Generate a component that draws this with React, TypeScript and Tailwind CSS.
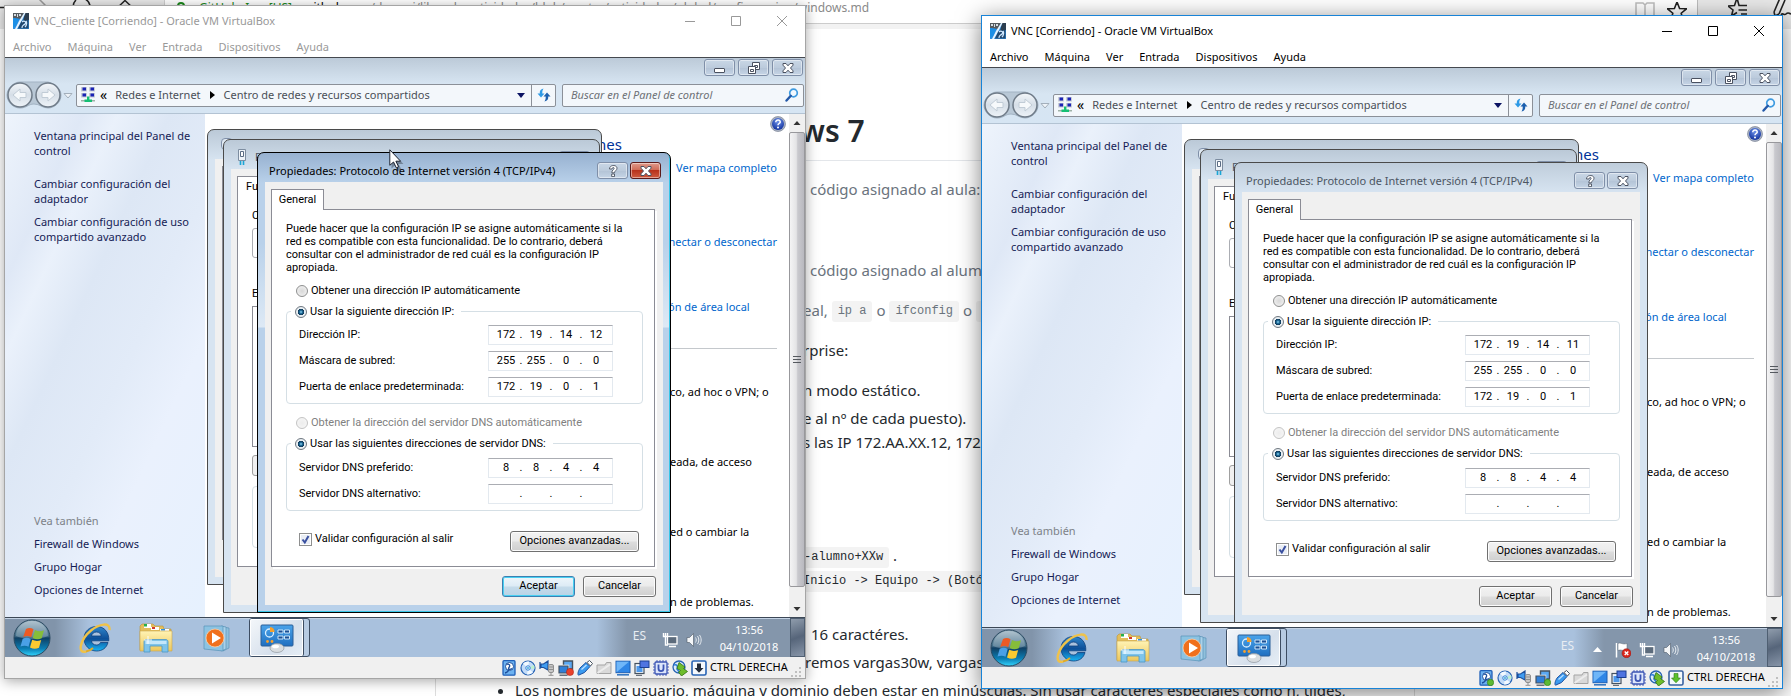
import React from "react";

const UI = "font-['Noto_Sans',sans-serif] text-[11px]";
const SMALL = "font-[Roboto,sans-serif] text-[11px]";

/* ---------- shared gradients ---------- */
function Defs() {
  return (
    <svg width="0" height="0" className="absolute" aria-hidden="true">
      <defs>
        <linearGradient id="gBlue" x1="0" y1="0" x2="0" y2="1">
          <stop offset="0" stopColor="#4aa3ea" />
          <stop offset="1" stopColor="#1f6fc0" />
        </linearGradient>
        <linearGradient id="gFolder" x1="0" y1="0" x2="0" y2="1">
          <stop offset="0" stopColor="#fff3b4" />
          <stop offset="1" stopColor="#ecc75c" />
        </linearGradient>
        <linearGradient id="gOrb" x1="0" y1="0" x2="0" y2="1">
          <stop offset="0" stopColor="#9fb6c4" />
          <stop offset="0.45" stopColor="#3d6a86" />
          <stop offset="0.5" stopColor="#0f3f63" />
          <stop offset="0.8" stopColor="#0b7fb5" />
          <stop offset="1" stopColor="#33d6ff" />
        </linearGradient>
        <linearGradient id="gIE" x1="0" y1="0" x2="0" y2="1">
          <stop offset="0" stopColor="#2f86cc" />
          <stop offset="0.5" stopColor="#0d4f98" />
          <stop offset="1" stopColor="#18b4f2" />
        </linearGradient>
        <linearGradient id="gNav" x1="0" y1="0" x2="0" y2="1">
          <stop offset="0" stopColor="#f4f7fa" />
          <stop offset="0.5" stopColor="#d5dee7" />
          <stop offset="1" stopColor="#eef3f8" />
        </linearGradient>
        <radialGradient id="gHelp" cx="0.5" cy="0.3" r="0.7">
          <stop offset="0" stopColor="#6f93ea" />
          <stop offset="1" stopColor="#10309c" />
        </radialGradient>
      </defs>
    </svg>
  );
}

/* ---------- icons ---------- */
const VBoxIcon = () => (
  <svg viewBox="0 0 16 16" className="size-4 shrink-0">
    <rect width="16" height="16" fill="#2f8fe0" />
    <path d="M0 0h11L8 6 0 5z" fill="#555b60" />
    <path d="M1 1h2v2H1zM4 1h1v3H4zM6 1h2v2H6z" fill="#d6dde2" />
    <path d="M12 0h4v7l-6 1z" fill="#2c3e50" />
    <path d="M11 0h1.500L8 9l-4 7H2l4-8z" fill="#e7f4ff" />
    <path d="M0 5l6 1-3 7-3 2z" fill="#1c8fe6" />
    <path d="M8.500 8l7-1.500V15.500H5z" fill="#22486f" />
    <path d="M9 9c2-2 5 0 3 2s-3 1-3 4M13 8c1 1 1 4-1 6" stroke="#cfe8ff" fill="none" strokeWidth="1.200" />
  </svg>
);
const NetCenterIcon = () => (
  <svg viewBox="0 0 16 16" className="size-4 shrink-0">
    {[
      [1, 0],
      [9, 0],
      [1, 6],
      [9, 6],
    ].map(([x, y]) => (
      <g key={`${x}-${y}`}>
        <rect x={x} y={y} width="6" height="4.500" fill="#c9ced6" />
        <rect x={x + 1.5} y={y + 0.5} width="3.500" height="3" fill="#1b23b5" />
      </g>
    ))}
    <path d="M1 13h14v1.500H1z" fill="#9fb2a8" />
    <path d="M7 9.500h2.400v3H12v2.600H4.500v-2.600H7z" fill="#16bf74" />
  </svg>
);
const NavButtons = () => (
  <svg viewBox="0 0 72 30" className="h-[30px] w-[72px] shrink-0">
    <path d="M15 2h28c4 1 13 5 13 13s-7 13-13 13-8-4-14-4-7 4-14 4S2 22 2 15 9 2 15 2z" fill="#b9c8d6" stroke="#a3b3c3" />
    {[15, 43].map((c) => (
      <circle key={c} cx={c} cy="15" r="12" fill="url(#gNav)" stroke="#6f7b88" strokeWidth="1.500" />
    ))}
    <path d="M8 15l7-6v3.500h6v5h-6V21z" fill="#f6f9fb" stroke="#c1ccd6" />
    <path d="M50 15l-7-6v3.500h-6v5h6V21z" fill="#f6f9fb" stroke="#c1ccd6" />
    <path d="M59 13.500h8L63 18z" fill="#eef3f8" stroke="#a3afbb" />
  </svg>
);
const RefreshIcon = () => (
  <svg viewBox="0 0 14 14" className="size-3.5">
    <path d="M6.500 .5C3.500 1 2.500 3 2.800 5.500H.5L4 9.500l3.500-4H5.300C5.200 3.500 5.500 2 6.500 .5z" fill="#2e9ae6" />
    <path d="M7.500 13.500c3-.5 4-2.500 3.700-5h2.300L10 4.500l-3.500 4h2.200c.1 2-.2 3.500-1.200 5z" fill="#1b5fae" />
  </svg>
);
const SearchGlass = () => (
  <svg viewBox="0 0 14 14" className="size-3.5 shrink-0">
    <circle cx="8.500" cy="5" r="3.800" fill="#f2f9ff" stroke="#3f9be0" strokeWidth="1.700" />
    <path d="M5.800 7.800L1.500 12.500" stroke="#2459a8" strokeWidth="2.400" strokeLinecap="round" />
  </svg>
);
const HelpIcon = () => (
  <svg viewBox="0 0 16 16" className="size-4">
    <circle cx="8" cy="8" r="7.500" fill="#a9b2c4" stroke="#6d7688" strokeWidth="0.600" />
    <circle cx="8" cy="8" r="6" fill="url(#gHelp)" />
    <path d="M5.800 6.200c0-3 4.600-2.800 4.400-.1-.1 1.400-2.200 1.500-2.200 3.100" stroke="#fff" strokeWidth="1.500" fill="none" />
    <circle cx="8" cy="11.400" r="1" fill="#fff" />
  </svg>
);
const CaptionGlyph = ({ kind }: { kind: "min" | "restore" | "close" | "help" }) => (
  <svg viewBox="0 0 14 12" className="h-3 w-3.5">
    {kind === "min" && <rect x="1.500" y="6.500" width="10" height="4" rx="0.500" fill="#fff" stroke="#4a5160" />}
    {kind === "restore" && (
      <g fill="#fff" stroke="#4a5160">
        <path d="M5.500.5h7v7h-7z" />
        <path d="M7.500 3.500h3v2h-3z" />
        <path d="M1.500 4.500h7v7h-7z" />
        <path d="M3.500 7.500h3v2h-3z" />
      </g>
    )}
    {kind === "close" && (
      <path d="M2 1.500h3L7 3.800l2-2.300h3v1.700L9.500 6 12 8.800v1.700H9L7 8.200 5 10.500H2V8.800L4.500 6 2 3.200z" fill="#fff" stroke="#4a5160" />
    )}
    {kind === "help" && (
      <g fill="#fff" stroke="#4a5160" strokeWidth="0.900">
        <path d="M3.500 4C3.500-.5 11 -.5 11 3.200c0 2.300-2.500 2.500-2.500 4.600h-2.700c0-3 2.300-3 2.300-4.500 0-1.200-2-1.200-2 .7z" />
        <path d="M5.700 9h2.800v2.600H5.700z" />
      </g>
    )}
  </svg>
);
const AdapterIcon = () => (
  <svg viewBox="0 0 10 16" className="h-4 w-2.5 shrink-0">
    <path d="M1.500.5h7v11h-7z" fill="#eef3f8" stroke="#7d8da0" />
    <path d="M3.500 2.500h3v5h-3z" fill="#fff" stroke="#5b6d84" />
    <path d="M3.500 12v4M6.500 12v4" stroke="#1aa6d6" strokeWidth="1.600" />
  </svg>
);
const StartOrb = () => (
  <svg viewBox="0 0 38 38" className="size-[38px]">
    <circle cx="19" cy="19" r="18" fill="url(#gOrb)" stroke="#2b4a61" />
    <path d="M3 17a16 15 0 0 1 32 0c-8 4-24 4-32 0z" fill="#fff" opacity="0.220" />
    <path d="M13 10c2.500-1.300 5-1.300 7.500.2l-2.300 8c-2.500-1.500-5-1.400-8-.2z" fill="#ec5a24" />
    <path d="M22 11c3 1.700 6 1.700 9 .2l-2.300 8c-3 1.500-6 1.300-9-.2z" fill="#86bd3a" />
    <path d="M9.700 19.800c3-1.500 5.500-1.300 8 .2l-2.200 7.800c-2.500-1.500-5-1.500-8-.2z" fill="#4aa0e6" />
    <path d="M19.200 20.800c3 1.500 6 1.500 9 .2L26 28.800c-3 1.500-6 1.300-9-.2z" fill="#fbc930" />
  </svg>
);
const IEIcon = () => (
  <svg viewBox="0 0 32 32" className="size-8">
    <path
      d="M17.500 4.500c-7 0-12.500 5-12.500 12S10.500 29 17.500 29c5.500 0 10-2.800 11.500-8.500h-7.500c-.8 1.800-2.200 2.500-4 2.500-3 0-4.700-1.600-5-4.200H29.800C30.300 10.500 25.500 4.500 17.500 4.500zm-5 9.500c.5-2.500 2.400-4 5-4s4.500 1.500 4.800 4z"
      fill="url(#gIE)"
      stroke="#0c3f7c"
      strokeWidth="0.800"
    />
    <path d="M7 29.500C-2.500 32 1.500 17 12 8.500 20 2 31.500 -.5 30.500 8" fill="none" stroke="#efc24a" strokeWidth="2.400" />
    <path d="M7 29.500c2.500-.5 5-1.500 7-3.500" fill="none" stroke="#e3ac25" strokeWidth="1.800" />
  </svg>
);
const FolderIcon = () => (
  <svg viewBox="0 0 34 30" className="h-[30px] w-[34px]">
    <path d="M1 3l2-2h11l2 2h8l1 3h7v21H1z" fill="#e3be5b" stroke="#b9933a" strokeWidth="0.600" />
    <path d="M5 1h7v4H5z" fill="#fff" />
    <path d="M5 1h3v2.500H5z" fill="#27b04a" />
    <path d="M12 4h8v3h-8z" fill="#fff" />
    <path d="M13 4h3v2h-3z" fill="#d33a2c" />
    <path d="M21 6h9v3h-9z" fill="#fff" />
    <path d="M22 6h4v1.500h-4z" fill="#2b8fe0" />
    <path d="M1 8h32v20H1z" fill="url(#gFolder)" stroke="#c9a449" strokeWidth="0.600" />
    <path d="M5 18.500c0-1 1-2 2-2h20c1 0 2 1 2 2V29h-6v-6H11v6H5z" fill="#7fc4ea" stroke="#4a97c6" strokeWidth="0.800" />
    <path d="M6.500 18h21v3h-21z" fill="#c4e7fb" />
    <path d="M9 13v8M5 17h8" stroke="#fff" strokeWidth="0.900" />
  </svg>
);
const MediaIcon = () => (
  <svg viewBox="0 0 30 28" className="h-7 w-[30px]">
    <path d="M20 3l6 1v20l-6 3z" fill="#8fc0dc" stroke="#5b94b8" strokeWidth="0.700" />
    <path d="M18 2l5 1v22l-5 2z" fill="#a9d2ea" stroke="#5b94b8" strokeWidth="0.700" />
    <path d="M1 2h19v25L1 25z" fill="#8cc3e2" stroke="#5793b8" strokeWidth="0.700" />
    <circle cx="12" cy="14" r="9" fill="#f0701c" stroke="#fbd0a8" strokeWidth="0.800" />
    <path d="M9 8.500l9 5.500-9 5.500z" fill="#fff" />
  </svg>
);
const PanelIcon = () => (
  <svg viewBox="0 0 34 30" className="h-[30px] w-[34px]">
    <rect x="1" y="2" width="32" height="21" rx="1" fill="url(#gBlue)" stroke="#2a5f98" />
    <circle cx="9.500" cy="10" r="4" fill="none" stroke="#d9efff" strokeWidth="1.300" />
    <path d="M10 9V4a5 5 0 0 1 4.500 5z" fill="#f6a02c" />
    <path d="M18 7h5v3h-5zM24.500 7h5v3h-5zM18 13h5v3h-5zM24.500 13h5v3h-5z" fill="#1b4f94" stroke="#d9efff" strokeWidth="0.900" />
    <circle cx="7.500" cy="18.500" r="1.400" fill="#f6a02c" />
    <circle cx="12" cy="18.500" r="1.400" fill="#f6a02c" />
    <ellipse cx="17" cy="25" rx="7" ry="4.500" fill="#d9dde0" stroke="#8f979d" strokeWidth="0.700" />
    <ellipse cx="15.500" cy="23.500" rx="3.500" ry="1.800" fill="#fff" />
  </svg>
);
const TrayNet = () => (
  <svg viewBox="0 0 16 16" className="size-4">
    <path d="M1.500 1v3.500h4V1M3.500 1v12H6" fill="none" stroke="#fff" strokeWidth="1.400" />
    <rect x="5.500" y="4.500" width="9.500" height="7.500" fill="#5c6b7c" stroke="#fff" strokeWidth="1.300" />
    <path d="M7 14.500h7" stroke="#fff" strokeWidth="1.500" />
  </svg>
);
const TrayVolume = () => (
  <svg viewBox="0 0 16 16" className="size-4">
    <path d="M1 5.500h2.500L7.500 1.500v13L3.500 10.500H1z" fill="#f4f6f8" stroke="#4c5866" strokeWidth="0.600" />
    <path d="M9.500 5.500c1 1.500 1 3.500 0 5M11.500 4c1.800 2.500 1.800 5.500 0 8M13.500 3c2.200 3 2.200 7 0 10" fill="none" stroke="#e6ebf0" />
  </svg>
);
const TrayFlag = () => (
  <svg viewBox="0 0 16 16" className="size-4">
    <path d="M1.500 1v14.500" stroke="#fff" strokeWidth="1.500" />
    <path d="M3 1.500c3-1.500 4 1.500 9 0V8C8 9.500 6 7 3 8.500z" fill="#fff" stroke="#5b6673" strokeWidth="0.500" />
    <circle cx="11.500" cy="11.200" r="4.500" fill="#d8271d" stroke="#8f1410" strokeWidth="0.500" />
    <path d="M9.700 9.400l3.600 3.600M13.300 9.400L9.700 13" stroke="#fff" strokeWidth="1.400" />
  </svg>
);

/* Icons of the virtual machine's status bar. */
function StatusIcons({ on }: { on: boolean }) {
  const box = "size-4 shrink-0";
  const led = on ? <circle cx="12.500" cy="12.500" r="3.200" fill="#5cba34" stroke="#2b7a14" strokeWidth="0.600" /> : null;
  return (
    <div className="flex items-center gap-[3px]">
      <svg viewBox="0 0 16 16" className={box}>
        <rect x="2" y="0.700" width="12" height="14.500" rx="1" fill="#6db2f0" stroke="#1f5fb8" strokeWidth="1.300" />
        <circle cx="8.500" cy="6.500" r="4" fill="#fff" stroke="#1d4f9c" />
        <path d="M5.500 4.500c3-1 4 1 2.500 3s1 2.500 3 1M7.500 9.500c0 2-1.500 3-3.500 3.500" fill="none" stroke="#1d4f9c" strokeWidth="1.300" />
        {led}
      </svg>
      <svg viewBox="0 0 16 16" className={box}>
        <circle cx="8" cy="8" r="7" fill="#c3dcf8" stroke="#2763b4" strokeWidth="1.200" />
        <path d="M8 8L3 3.500A7 7 0 0 1 9 1.500zM8 8l5 4.500a7 7 0 0 1-6 2z" fill="#f2f9ff" />
        <path d="M8 8l6-3a6.500 6.500 0 0 1 .3 4z" fill="#bdf0cf" />
        <circle cx="8" cy="8" r="2.200" fill="#fff" stroke="#2f7fd8" />
        <circle cx="8" cy="8" r="0.900" fill="#24a0d8" />
      </svg>
      <svg viewBox="0 0 16 16" className={box}>
        <path d="M1 2v7M2 4h2.500L9 1v9L4.500 7.500H2z" fill="#3f9bf0" stroke="#1d4f9c" strokeWidth="1.200" />
        <rect x="9.500" y="4.500" width="5" height="8" rx="1.500" fill="#c8c8c8" stroke="#8f8f8f" />
        <path d="M12 12.500v2.500M9.500 15.300h5M9.500 7h5M9.500 9.500h5" stroke="#8f8f8f" />
      </svg>
      <svg viewBox="0 0 16 16" className={box}>
        <path d="M5.500 1h9v8h-9z" fill="#5aa8f2" stroke="#46525f" strokeWidth="1.400" />
        <path d="M1 6h9v7H1z" fill="#2f7fd8" stroke="#f4f7fa" strokeWidth="2.400" />
        <path d="M1 6h9v7H1z" fill="#2f7fd8" stroke="#46525f" strokeWidth="1.200" />
        <path d="M1.500 15.200h8" stroke="#46525f" strokeWidth="1.200" />
        {on ? led : <circle cx="12" cy="12" r="3.600" fill="#e8412c" stroke="#a82012" strokeWidth="0.500" />}
      </svg>
      <svg viewBox="0 0 16 16" className={box}>
        <path d="M3 8l6-5.500 4 4L7.500 12.500 1.500 15.200C0 14 2 9.500 3 8z" fill="#3b9bf0" stroke="#1d4f9c" />
        <path d="M10 2.500L12.500.5l3 3L13.500 6z" fill="#fff" stroke="#46525f" />
        <path d="M4.500 9.500l5-4.500" stroke="#bfe0ff" strokeWidth="1.300" />
      </svg>
      <svg viewBox="0 0 16 16" className={box}>
        <path d="M1 5h8l1.500-2.500h4.500v11H1z" fill="#d9d9d9" stroke="#a5a5a5" />
        <path d="M1.500 13L14 4.500" stroke="#ededed" strokeWidth="2" />
      </svg>
      <svg viewBox="0 0 16 16" className={box}>
        <rect x="1" y="1.200" width="14" height="11.500" fill="#2f86e6" stroke="#1d5fb4" />
        <path d="M1.500 12.200L14 1.700H1.500z" fill="#6fb6f8" />
        <path d="M2 14.800h12" stroke="#3a78c0" strokeWidth="1.600" />
      </svg>
      <svg viewBox="0 0 16 16" className={box}>
        <rect x="1" y="3.500" width="9" height="10" fill="#eef4fb" stroke="#46525f" strokeWidth="1.200" />
        <rect x="2.500" y="6" width="6" height="6" fill="#4f9aec" />
        <rect x="6" y="1" width="9" height="6.500" fill="#4f74e0" stroke="#1b3f92" />
        <path d="M2 15.300h6" stroke="#46525f" />
      </svg>
      <svg viewBox="0 0 16 16" className={box}>
        <path d="M4 0v16M7 0v16M10 0v16M13 0v16M0 4h16M0 7h16M0 10h16M0 13h16" stroke="#3c55b4" strokeWidth="0.900" />
        <rect x="2" y="2" width="12" height="12" rx="1" fill="#dde6fb" stroke="#3c55b4" strokeWidth="1.300" />
        <path d="M5.500 4.500v4c0 3.500 5 3.500 5 0v-4" fill="none" stroke="#3c55b4" strokeWidth="1.800" />
      </svg>
      <svg viewBox="0 0 16 16" className={box}>
        <circle cx="7" cy="7" r="6" fill="#dcecfb" stroke="#2763b4" strokeWidth="1.300" />
        <path d="M2 5c3-1 4 1 3 4l3 4" fill="none" stroke="#2f7fd8" strokeWidth="1.500" />
        <path d="M7 2.500l6 4.500-1.500 1.500 4 3-6 4.500-3-4 2-1.500-3.500-2z" fill="#6ebd2c" stroke="#2e6e10" strokeWidth="0.800" />
      </svg>
      <svg viewBox="0 0 16 16" className={box}>
        <rect x="1" y="1" width="14" height="14" rx="1.500" fill="#f4f8fc" stroke={on ? "#3a62a0" : "#2763b4"} strokeWidth="1.600" />
        <path d="M6 3.500h4V8h2.500L8 12.800 3.500 8H6z" fill={on ? "#5cc02c" : "#222b3a"} stroke={on ? "#2b7a14" : "none"} strokeWidth="0.600" />
      </svg>
    </div>
  );
}

/* ---------- guest pieces ---------- */
function CaptionButton({ kind, label, red }: { kind: "min" | "restore" | "close" | "help"; label: string; red?: boolean }) {
  const tone = red
    ? "border-[#5b1a1a] bg-[linear-gradient(#e09a8c,#cf6a55_48%,#b8321c_50%,#cf5b40)]"
    : "border-[#7f8fa8] bg-[linear-gradient(#c9d7e6,#bccbdc_50%,#b3c3d6_52%,#c6d5e6)]";
  return (
    <button aria-label={label} className={`grid h-[17px] w-[31px] place-items-center rounded-[3px] border shadow-[inset_0_0_0_1px_rgba(255,255,255,0.45)] ${tone}`}>
      <CaptionGlyph kind={kind} />
    </button>
  );
}

function IpField({ id, label, octets }: { id: string; label: string; octets: string[] }) {
  return (
    <div className="flex items-center justify-between">
      <label htmlFor={`${id}-0`}>{label}</label>
      <div className="flex h-5 w-[125px] items-center border border-[#e3e9ef] border-t-[#abadb3] bg-white pl-1">
        {octets.map((o, i) => (
          <React.Fragment key={i}>
            {i > 0 && <span className="w-1 text-center">.</span>}
            <input
              id={`${id}-${i}`}
              aria-label={`${label} ${i + 1}`}
              defaultValue={o}
              className="h-4 w-[26px] bg-transparent p-0 text-center outline-none"
            />
          </React.Fragment>
        ))}
      </div>
    </div>
  );
}

function Radio({ name, label, checked, disabled }: { name: string; label: string; checked?: boolean; disabled?: boolean }) {
  return (
    <label className={`flex items-center gap-[3px] leading-[13px] ${disabled ? "text-[#808080]" : "text-black"}`}>
      <input
        type="radio"
        name={name}
        defaultChecked={checked}
        disabled={disabled}
        className="size-3 appearance-none rounded-full border border-[#8e8f8f] bg-[radial-gradient(#d8d8d8,#f6f6f6)] checked:border-[#6f7780] checked:bg-[radial-gradient(#9fe0fa_0,#1f6f9e_20%,#0d3656_42%,#e8eef2_50%)] disabled:border-[#c4c4c4] disabled:bg-[radial-gradient(#ececec,#f8f8f8)]"
      />
      {label}
    </label>
  );
}

function PushButton({ children, wide, primary }: { children: React.ReactNode; wide?: boolean; primary?: boolean }) {
  const tone = primary
    ? "border-[#3c7fb1] bg-[linear-gradient(#eef6fb,#ddebf5_48%,#c5dbea_52%,#b8d3e6)] shadow-[inset_0_0_0_1px_#48d0f2]"
    : "border-[#707070] bg-[linear-gradient(#f2f2f2,#ebebeb_48%,#dddddd_52%,#cfcfcf)] shadow-[inset_0_0_0_1px_#fcfcfc]";
  return <button className={`h-[21px] rounded-[3px] border ${wide ? "w-[129px]" : "w-[73px]"} ${tone}`}>{children}</button>
}

function TcpDialog({ id, active, host }: { id: string; active: boolean; host: string }) {
  const frame = active
    ? "border-black bg-[linear-gradient(#97b1d0_0px,#b9d1ea_30px,#b9d1ea_90px,#dde9f5_174px,#b9d1ea_175px)] shadow-[inset_-1px_-1px_0_#38c6e8]"
    : "border-[#4a4a4a] bg-[linear-gradient(#bfcddb_0px,#d7e4f1_30px)]";
  return (
    <section
      aria-label="Propiedades: Protocolo de Internet versión 4 (TCP/IPv4)"
      className={`absolute top-[94px] left-[252px] flex h-[461px] w-[414px] flex-col rounded-t-[7px] border px-[7px] pb-[7px] ${frame} ${SMALL}`}
    >
      <header className="flex h-[29px] shrink-0 items-center pt-1.5 pl-1">
        <h2 className={`grow leading-4 ${UI} ${active ? "text-black" : "text-[#4c5663]"}`}>Propiedades: Protocolo de Internet versión 4 (TCP/IPv4)</h2>
        <div className="flex gap-0.5 pr-0.5">
          <CaptionButton kind="help" label="Ayuda" />
          <CaptionButton kind="close" label="Cerrar" red={active} />
        </div>
      </header>
      <div className="flex grow flex-col bg-[#f0f0f0] pt-[7px] pr-[7px] pl-1.5 text-black">
        <button className="relative z-10 -mb-px h-[21px] w-[53px] border border-b-0 border-[#8b8c95] bg-white">General</button>
        <div className="mr-px h-[358px] border border-[#8b8c95] bg-white pt-3 pr-[11px] pl-3.5 shadow-[2px_2px_0_#fff]">
          <p className="w-[340px] pb-4 leading-[13px]">
            Puede hacer que la configuración IP se asigne automáticamente si la
            <br />
            red es compatible con esta funcionalidad. De lo contrario, deberá
            <br />
            consultar con el administrador de red cuál es la configuración IP
            <br />
            apropiada.
          </p>
          <div className="-mt-1.5 pl-2.5">
            <Radio name={`${id}-ip`} label="Obtener una dirección IP automáticamente" />
          </div>
          <fieldset className="mt-2 h-[99px] rounded-[4px] border border-[#d5dfe5] pr-[29px] pl-1.5">
            <legend className="ml-[-2px] pr-[7px] pl-1">
              <Radio name={`${id}-ip`} label="Usar la siguiente dirección IP:" checked />
            </legend>
            <div className="flex flex-col gap-1.5 pt-[7px] pl-1.5">
              <IpField id={`${id}-addr`} label="Dirección IP:" octets={["172", "19", "14", host]} />
              <IpField id={`${id}-mask`} label="Máscara de subred:" octets={["255", "255", "0", "0"]} />
              <IpField id={`${id}-gate`} label="Puerta de enlace predeterminada:" octets={["172", "19", "0", "1"]} />
            </div>
          </fieldset>
          <div className="mt-3 pl-2.5">
            <Radio name={`${id}-dns-auto`} label="Obtener la dirección del servidor DNS automáticamente" disabled />
          </div>
          <fieldset className="mt-2 h-[74px] rounded-[4px] border border-[#d5dfe5] pr-[29px] pl-1.5">
            <legend className="ml-[-2px] pr-[7px] pl-1">
              <Radio name={`${id}-dns`} label="Usar las siguientes direcciones de servidor DNS:" checked />
            </legend>
            <div className="flex flex-col gap-1.5 pt-2 pl-1.5">
              <IpField id={`${id}-dns1`} label="Servidor DNS preferido:" octets={["8", "8", "4", "4"]} />
              <IpField id={`${id}-dns2`} label="Servidor DNS alternativo:" octets={["", "", "", ""]} />
            </div>
          </fieldset>
          <div className="flex items-start justify-between pt-5 pr-1 pl-[13px]">
            <label className="flex items-center gap-[3px]">
              <span className="grid size-[13px] place-items-center">
                <input
                  type="checkbox"
                  defaultChecked
                  className="col-start-1 row-start-1 size-[13px] appearance-none border border-[#8e8f8f] bg-[#e9edf4] shadow-[inset_0_0_0_1px_#fff]"
                />
                <svg viewBox="0 0 13 13" className="pointer-events-none col-start-1 row-start-1 size-[13px]">
                  <path d="M3.500 6.500L5.800 9.500 9.500 3" fill="none" stroke="#3a50a0" strokeWidth="2" />
                </svg>
              </span>
              Validar configuración al salir
            </label>
            <PushButton wide>Opciones avanzadas...</PushButton>
          </div>
        </div>
        <div className="flex justify-end gap-2 pt-[9px]">
          <PushButton primary={active}>Aceptar</PushButton>
          <PushButton>Cancelar</PushButton>
        </div>
      </div>
    </section>
  );
}

function BackDialogs() {
  const frame = "absolute rounded-t-[7px] border border-[#4a4a4a] bg-[linear-gradient(#bbc9d7_0px,#d7e4f1_30px)] px-[7px] pb-[7px] text-black";
  return (
    <>
      <div className={`${frame} top-[71px] left-[202px] flex h-[456px] w-[395px] flex-col`}>
        <div className="flex h-[29px] shrink-0 items-end pl-1.5">
          <span className="mb-[9px] h-3 w-3 rounded-sm border border-[#7f8fa8] bg-[#dfe9f3]" />
        </div>
        <div className="grow bg-[#f0f0f0] pt-[7px] pl-[7px]">
          <div className="h-[374px] border border-[#8b8c95] bg-[#e8ecf0]" />
        </div>
      </div>
      <div className={`${frame} top-[81px] left-[218px] flex h-[474px] w-[377px] flex-col ${SMALL}`}>
        <div className="flex h-[29px] shrink-0 items-start pt-[9px] pl-1.5">
          <AdapterIcon />
          <span className={`pl-2 leading-4 text-[#4c5663] ${UI}`}>P</span>
          <span className="mt-0.5 mr-0.5 ml-auto">
            <CaptionButton kind="close" label="Cerrar propiedades" />
          </span>
        </div>
        <div className="grow bg-[#f0f0f0] pt-[7px] pl-1.5">
          <div className="flex h-[391px] flex-col border border-[#8b8c95] bg-white pl-3.5 leading-4">
            <span className="-ml-1.5 pt-0.5">Fu</span>
            <span className="pt-[13px]">C</span>
            <div className="mt-1 h-[30px] shrink-0 rounded-[3px] border border-[#abadb3]" />
            <span className="pt-7">E</span>
            <div className="mt-1 h-[141px] shrink-0 border border-[#8b8c95]" />
            <div className="mt-2 h-[21px] shrink-0 rounded-[3px] border border-[#a0a0a0] bg-[#f0f0f0]" />
            <div className="mt-2.5 h-[62px] shrink-0 rounded-[4px] border border-[#d5dfe5]" />
          </div>
        </div>
      </div>
    </>
  );
}

function Sidebar() {
  const link = "block leading-[15px] text-[#151c55]";
  return (
    <nav className="flex w-[200px] shrink-0 flex-col justify-between bg-[linear-gradient(115deg,#eef4fc_0%,#dfe8f6_18%,#eaf1fb_26%,#dde7f5_38%,#e2ebf8_55%,#eaf1fd_70%,#e6f1fe_100%)] pt-3.5 pb-4 pl-[29px]">
      <div>
        <a href="#panel" className={link}>
          Ventana principal del Panel de
          <br />
          control
        </a>
        <a href="#adaptador" className={`mt-[18px] ${link}`}>
          Cambiar configuración del
          <br />
          adaptador
        </a>
        <a href="#avanzado" className={`mt-2 ${link}`}>
          Cambiar configuración de uso
          <br />
          compartido avanzado
        </a>
      </div>
      <div className="leading-[23px] text-[#151c55]">
        <p className="text-[#7d8288]">Vea también</p>
        <a href="#firewall" className="block">Firewall de Windows</a>
        <a href="#grupo" className="block">Grupo Hogar</a>
        <a href="#internet" className="block">Opciones de Internet</a>
      </div>
    </nav>
  );
}

function Guest({ id, active, host, flag }: { id: string; active: boolean; host: string; flag: boolean }) {
  return (
    <div className={`relative flex h-[600px] flex-col overflow-hidden border-t border-[#45494f] bg-white ${UI}`}>
      <div className="flex h-14 shrink-0 flex-col border-b border-[#b3c3d3] bg-[linear-gradient(#bccad8,#d7e5f2_26px,#d6e5f3)]">
        <div className="flex h-[22px] shrink-0 justify-end gap-[3px] pt-px pr-0.5">
          <CaptionButton kind="min" label="Minimizar" />
          <CaptionButton kind="restore" label="Restaurar" />
          <CaptionButton kind="close" label="Cerrar ventana" />
        </div>
        <div className="flex items-center">
          <NavButtons />
          <div className="-ml-px flex h-[23px] w-[480px] items-center rounded-[2px] border border-[#8b9098] bg-[#f3f7fb] pl-[3px] text-[#4a4f57]">
            <NetCenterIcon />
            <span className="pl-1 text-[14px] leading-4 text-black">«</span>
            <span className="pl-2">Redes e Internet</span>
            <svg viewBox="0 0 5 8" className="mx-[9px] h-2 w-[5px]"><path d="M0 0l5 4-5 4z" fill="#000" /></svg>
            <span className="grow">Centro de redes y recursos compartidos</span>
            <svg viewBox="0 0 8 5" className="mr-1.5 h-[5px] w-2"><path d="M0 0h8L4 5z" fill="#0b1363" /></svg>
            <button aria-label="Actualizar" className="grid h-full w-6 place-items-center border-l border-[#8b9098]">
              <RefreshIcon />
            </button>
          </div>
          <div className="ml-1.5 flex h-[23px] grow items-center rounded-[2px] border border-[#8b9098] bg-[#f3f7fb] pr-1 pl-2">
            <input
              aria-label="Buscar en el Panel de control"
              placeholder="Buscar en el Panel de control"
              className="w-0 grow bg-transparent italic outline-none placeholder:text-[#6d7176]"
            />
            <SearchGlass />
          </div>
          <span className="w-px" />
        </div>
      </div>
      <div className="flex h-[503px] shrink-0">
        <Sidebar />
        <main className="flex grow flex-col pr-3 pl-[390px] leading-4">
          <h1 className="pt-5 pl-0.5 text-[15px] leading-5 text-[#003399]">nes</h1>
          <a href="#mapa" className="mt-1.5 text-right text-[#0066cc]">Ver mapa completo</a>
          <a href="#conectar" className="mt-[58px] text-right whitespace-nowrap text-[#0066cc]">nectar o desconectar</a>
          <a href="#local" className="mt-[49px] pl-[73px] text-[#0066cc]">ón de área local</a>
          <hr className="mt-[33px] border-[#c4c8cc]" />
          <div className="flex flex-col gap-[54px] pt-[35px] pl-[75px] whitespace-nowrap text-black">
            <p>co, ad hoc o VPN; o</p>
            <p>eada, de acceso</p>
            <p>ed o cambiar la</p>
            <p>n de problemas.</p>
          </div>
        </main>
        <div className="flex w-4 shrink-0 flex-col items-center bg-[#f0f0f0]">
          <svg viewBox="0 0 16 18" className="h-[18px] w-4"><path d="M4.500 11L8 7l3.500 4z" fill="#333" /></svg>
          <div className="grid w-4 grow place-items-center rounded-[2px] border border-[#98989c] bg-[linear-gradient(90deg,#f4f4f5,#e4e4e6_45%,#c9c9ce_55%,#b9b9bf)]">
            <svg viewBox="0 0 8 9" className="h-[9px] w-2"><path d="M0 1.500h8M0 4.500h8M0 7.500h8" stroke="#55595f" /></svg>
          </div>
          <svg viewBox="0 0 16 30" className="h-[30px] w-4"><path d="M4.500 20h7L8 24z" fill="#333" /></svg>
        </div>
      </div>
      <span className="absolute top-[58px] right-[19px]"><HelpIcon /></span>

      <BackDialogs />
      <TcpDialog id={id} active={active} host={host} />

      {active && (
        <svg viewBox="0 0 16 24" className="absolute top-[91px] left-[384px] h-6 w-4">
          <path d="M2.500 3v16.500l4-3.500 3 6 3-1.500-3-5.500h5z" fill="#000" opacity="0.300" />
          <path d="M.8.800v15.500l3.700-3.300 2.800 5.800 2.300-1.100-2.700-5.500h4.700z" fill="#fff" stroke="#1c2230" />
        </svg>
      )}

      <footer className="flex h-10 shrink-0 border-t border-[#3c4856] bg-[linear-gradient(90deg,#8194aa_0,#8194aa_50px,#a9c1dd_84px,#a9c1dd_592px,#8496ab_622px)] shadow-[inset_0_1px_0_#c3d2e4]">
        <div className="flex items-center">
          <button aria-label="Inicio" className="grid w-[54px] place-items-center"><StartOrb /></button>
          <button aria-label="Internet Explorer" className="ml-1.5 grid w-[60px] place-items-center"><IEIcon /></button>
          <button aria-label="Explorador" className="grid w-[62px] place-items-center"><FolderIcon /></button>
          <button aria-label="Reproductor" className="grid w-[62px] place-items-center"><MediaIcon /></button>
          <span className="flex h-[39px] w-[61px] rounded-[3px] border border-[#3d4d62] bg-[#b7cbe2]">
            <button
              aria-label="Panel de control"
              className="grid w-[54px] place-items-center rounded-[2px] border-r border-[#3d4d62] bg-[linear-gradient(135deg,#f4f7fa,#d6e0ec_60%,#e6eef6)] shadow-[inset_0_0_0_1px_#fff]"
            >
              <PanelIcon />
            </button>
          </span>
        </div>
        <div className="ml-auto flex items-center text-white">
          <span className="pb-1 text-[12px] text-[#e8edf2]">ES</span>
          {flag ? (
            <span className="ml-[19px] flex items-center gap-[13px] pt-1">
              <svg viewBox="0 0 9 5" className="h-[5px] w-[9px]"><path d="M0 5l4.500-5L9 5z" fill="#fff" /></svg>
              <TrayFlag />
            </span>
          ) : (
            <span className="w-2" />
          )}
          <span className="ml-2 flex gap-2 pt-1">
            <TrayNet />
            <TrayVolume />
          </span>
          <time className="ml-3.5 w-[66px] text-center leading-[17px]">
            13:56
            <br />
            04/10/2018
          </time>
          <span className="ml-2 h-full w-[15px] border border-[#4f5f72] bg-[linear-gradient(160deg,#8f9cac,#56657a_50%,#8795a8)]" />
        </div>
      </footer>
    </div>
  );
}

const MENU = ["Archivo", "Máquina", "Ver", "Entrada", "Dispositivos", "Ayuda"];

function VmWindow(props: { id: string; title: string; focused: boolean; dialogActive: boolean; host: string; place: string }) {
  const { id, title, focused, dialogActive, host, place } = props;
  const tone = focused
    ? "border-[#1883d7] text-black shadow-[0_4px_22px_rgba(0,0,0,0.5)]"
    : "border-[#a5a5a5] text-[#999999] shadow-[0_2px_12px_rgba(0,0,0,0.35)]";
  return (
    <section aria-label={title} className={`absolute flex w-[802px] flex-col border bg-white ${place} ${tone} ${UI}`}>
      <header className="flex h-[30px] items-center pl-2">
        <VBoxIcon />
        <span className="grow pl-[5px]">{title}</span>
        <div className="flex h-full">
          <button aria-label="Minimizar" className="grid w-[46px] place-items-center">
            <svg viewBox="0 0 10 10" className="size-2.5"><path d="M0 5.500h10" stroke="currentColor" /></svg>
          </button>
          <button aria-label="Maximizar" className="grid w-[46px] place-items-center">
            <svg viewBox="0 0 10 10" className="size-2.5"><path d="M.5.5h9v9h-9z" fill="none" stroke="currentColor" /></svg>
          </button>
          <button aria-label="Cerrar" className="grid w-[46px] place-items-center">
            <svg viewBox="0 0 10 10" className="size-2.5"><path d="M0 0l10 10M10 0L0 10" stroke="currentColor" /></svg>
          </button>
        </div>
      </header>
      <nav className="flex h-[21px] gap-4 pl-2 leading-5">
        {MENU.map((m) => (
          <button key={m}>{m}</button>
        ))}
      </nav>
      <Guest id={id} active={dialogActive} host={host} flag={focused} />
      <footer className="flex h-[21px] items-center justify-end bg-[#f0f0f0] pr-0.5 text-black">
        <StatusIcons on={focused} />
        <span className="w-[81px] pl-[3px] whitespace-nowrap">CTRL DERECHA</span>
        <svg viewBox="0 0 12 12" className="mt-2 ml-[3px] h-3 w-3 shrink-0">
          <path d="M8 1h2v2H8zM8 5h2v2H8zM8 9h2v2H8zM4 5h2v2H4zM4 9h2v2H4zM0 9h2v2H0z" fill="#bfbfbf" />
        </svg>
      </footer>
    </section>
  );
}

/* ---------- page behind the windows ---------- */
function Code({ children }: { children?: React.ReactNode }) {
  return (
    <code className="inline-block h-[21px] min-w-5 rounded-[3px] bg-[#f3f3f3] px-1.5 align-middle font-['Liberation_Mono',monospace] text-[12px] leading-[21px] whitespace-pre">
      {children}
    </code>
  );
}

function Browser() {
  return (
    <div className="flex h-full flex-col bg-white font-['Noto_Sans',sans-serif]">
      <header className="flex h-[29px] shrink-0 bg-[#e9e9e9]">
        <svg viewBox="0 0 164 24" className="h-6 w-[164px] shrink-0" fill="none" stroke="#222" strokeWidth="1.500">
          <path d="M0 7.500h4" />
          <path d="M38-2l8 8" stroke="#9a9a9a" />
          <path d="M77 14a9 9 0 0 1-1-14M85 -1a9 9 0 0 1 3 14" />
          <path d="M116 9l9-8.500 9 8.500" />
        </svg>
        <div className="flex grow items-start border-l border-[#cfcfcf] bg-[#f2f2f2]">
          <div className="flex h-6 grow items-center border-b border-[#cccccc] bg-white pl-2.5 text-[12px] leading-4 whitespace-nowrap text-[#8a8a8a]">
            <svg viewBox="0 0 12 16" className="-mt-1 h-4 w-3" fill="none" stroke="#1c8a1c" strokeWidth="2">
              <path d="M3 8V4a3 3 0 0 1 6 0v4M1 8h10v7H1z" />
            </svg>
            <span className="-mt-2 pl-3 text-[#1c8a1c]">GitHub, Inc. [US]</span>
            <span className="-mt-2 pl-3.5 text-black">github.com</span>
            <span className="-mt-2">/dvarrui/libro-de-actividades/blob/master/actividades/global/configuracion/windows.md</span>
            <span className="mr-2.5 ml-auto flex items-center gap-3">
              <svg viewBox="0 0 20 20" className="size-5" fill="none" stroke="#bdbdbd" strokeWidth="1.500">
                <path d="M1 1h7l2 2 2-2h7v14h-7l-2 2-2-2H1zM10 3v14" />
              </svg>
              <svg viewBox="0 0 20 20" className="size-5" fill="none" stroke="#222" strokeWidth="1.600">
                <path d="M10 0l2.600 6.500 6.900.3-5.300 4.400 1.800 6.800-6-3.800L4 18l1.800-6.800L.5 6.800l6.900-.3z" />
              </svg>
            </span>
          </div>
        </div>
        <div className="flex h-6 w-[94px] shrink-0 items-start gap-6 border-l border-[#bdbdbd] pl-[30px]">
          <svg viewBox="0 0 20 20" className="size-5 shrink-0" fill="none" stroke="#222" strokeWidth="1.600">
            <path d="M9 -2l2 7.500H19M10.500 10H19M13 14h6M9 -2L6.500 5.500 0 6l5 4L3.500 16 9 12.500" />
          </svg>
          <svg viewBox="0 0 20 20" className="size-5 shrink-0" fill="none" stroke="#222" strokeWidth="1.600">
            <path d="M2 12L8 -2M7 14l6-14M2 12l1 4 4-2M9 15c2-3 3 1 5-1s2-1 5 0" />
          </svg>
        </div>
      </header>
      <article className="ml-[435px] w-[980px] grow border-x border-[#dddddd] text-[15px] leading-6 whitespace-nowrap text-[#24292e]">
        <h1 className="pt-[82px] pb-[9px] pl-[364px] text-[30px] leading-10 font-semibold">ws 7</h1>
        <hr className="mx-11 border-[#e3e6ea]" />
        <div className="pt-4 pl-[374px] text-[#6a737d]">
          <p>código asignado al aula:</p>
          <p className="pt-[57px]">código asignado al alum</p>
        </div>
        <div className="pl-[367px]">
          <p className="pt-4 text-[#6a737d]">
            eal, <Code>ip a</Code> o <Code>ifconfig</Code> o <Code />
          </p>
          <p className="pt-4">rprise:</p>
          <p className="pt-4">n modo estático.</p>
          <p className="pt-1">e al nº de cada puesto).</p>
          <p>s las IP 172.AA.XX.12, 172</p>
          <p className="pt-[89px] pl-px">
            <span className="-ml-1.5"><Code>-alumno+XXw</Code></span> .
          </p>
          <p>
            <span className="-ml-1.5"><Code>Inicio -&gt; Equipo -&gt; (Botón</Code></span>
          </p>
          <p className="pt-[30px] pl-2">16 caractéres.</p>
          <p className="pt-1 pl-0.5">remos vargas30w, vargas</p>
        </div>
        <ul className="list-disc pt-1 pl-[79px]">
          <li>Los nombres de usuario, máquina y dominio deben estar en minúsculas. Sin usar caracteres especiales como ñ, tildes,</li>
        </ul>
      </article>
    </div>
  );
}

export default function App() {
  return (
    <div className="relative h-screen overflow-hidden bg-white">
      <Defs />
      <Browser />
      <VmWindow id="cliente" title="VNC_cliente [Corriendo] - Oracle VM VirtualBox" focused={false} dialogActive host="12" place="top-[5px] left-1" />
      <VmWindow id="servidor" title="VNC [Corriendo] - Oracle VM VirtualBox" focused dialogActive={false} host="11" place="top-[15px] left-[981px]" />
    </div>
  );
}
